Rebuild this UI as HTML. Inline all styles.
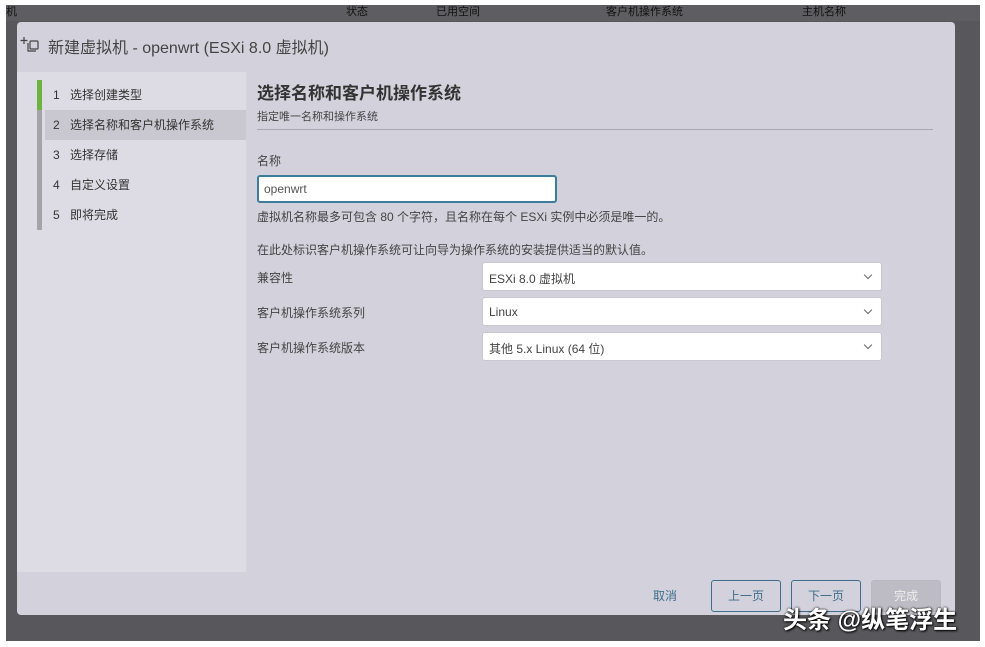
<!DOCTYPE html>
<html><head><meta charset="utf-8"><style>
*{margin:0;padding:0;box-sizing:border-box}
body{width:985px;height:647px;background:#fff;position:relative;overflow:hidden;font-family:"Liberation Sans","Noto Sans CJK SC",sans-serif;color:#333}
.bg{position:absolute;left:6px;top:5px;width:974px;height:636px;background:#58585c}
.hdr{position:absolute;left:6px;top:5px;width:974px;height:16px;background:#5e5e62;font-size:11px;color:#111;line-height:14px}
.hdr span{position:absolute;top:0}
.dlg{position:absolute;left:17px;top:22px;width:938px;height:593px;background:#d3d1db;border-radius:4px}
.title{position:absolute;left:31px;top:12px;font-size:16px;color:#444}
.ico{position:absolute;left:3px;top:14px;width:20px;height:16px}
.nav{position:absolute;left:0;top:50px;width:229px;height:500px;background:#dddce5}
.bar{position:absolute;left:20px;top:8px;width:5px;height:150px;background:#a3a3a8}
.bar i{display:block;width:5px;height:30px;background:#6db33f}
.step{position:absolute;left:28px;width:201px;height:30px;line-height:30px;font-size:12px;color:#333;padding-left:8px}
.step b{font-weight:normal;display:inline-block;width:17px}
.act{background:#c9c8d0}
.h{position:absolute;left:240px;top:57px;font-size:17px;font-weight:bold;color:#333}
.sub{position:absolute;left:240px;top:86px;font-size:11px;color:#444}
.line{position:absolute;left:240px;top:107px;width:676px;height:1px;background:#a8a8b0}
.t{position:absolute;font-size:12px;color:#444}
.inp{position:absolute;left:240px;top:153px;width:300px;height:28px;background:#fff;border:2px solid #3d7c9a;border-radius:3px;font-size:12px;padding:5px 5px;color:#555}
.sel{position:absolute;left:465px;width:400px;height:29px;background:#fff;border-radius:3px;font-size:12px;color:#444;padding:7px 6px;border:1px solid #c8c8d0}
.sel:after{content:"";position:absolute;right:10px;top:9px;width:5px;height:5px;border-right:1px solid #666;border-bottom:1px solid #666;transform:rotate(45deg)}
.btn{position:absolute;top:558px;height:32px;width:70px;border:1px solid #3d6f8c;border-radius:3px;font-size:12px;color:#3d6f8c;text-align:center;line-height:30px}
.wm{position:absolute;left:783px;top:600px;font-size:24px;color:#fff;text-shadow:1px 1px 2px #000,0 0 2px #000;font-weight:bold}
</style></head><body>
<div class="bg"></div>
<div class="hdr"><span style="left:0">机</span><span style="left:340px">状态</span><span style="left:430px">已用空间</span><span style="left:600px">客户机操作系统</span><span style="left:796px">主机名称</span></div>
<div class="dlg">
<svg class="ico" viewBox="0 0 20 16" fill="none" stroke="#444" stroke-width="1.2"><path d="M4 1v7M0.5 4.5h7"/><rect x="10" y="5" width="8" height="8" rx="1"/><path d="M8 7v8h8"/></svg>
<div class="title">新建虚拟机 - openwrt (ESXi 8.0 虚拟机)</div>
<div class="nav">
<div class="bar"><i></i></div>
<div class="step" style="top:8px"><b>1</b>选择创建类型</div>
<div class="step act" style="top:38px"><b>2</b>选择名称和客户机操作系统</div>
<div class="step" style="top:68px"><b>3</b>选择存储</div>
<div class="step" style="top:98px"><b>4</b>自定义设置</div>
<div class="step" style="top:128px"><b>5</b>即将完成</div>
</div>
<div class="h">选择名称和客户机操作系统</div>
<div class="sub">指定唯一名称和操作系统</div>
<div class="line"></div>
<div class="t" style="left:240px;top:130px">名称</div>
<div class="inp">openwrt</div>
<div class="t" style="left:240px;top:186px">虚拟机名称最多可包含 80 个字符，且名称在每个 ESXi 实例中必须是唯一的。</div>
<div class="t" style="left:240px;top:219px">在此处标识客户机操作系统可让向导为操作系统的安装提供适当的默认值。</div>
<div class="t" style="left:240px;top:247px">兼容性</div>
<div class="t" style="left:240px;top:282px">客户机操作系统系列</div>
<div class="t" style="left:240px;top:317px">客户机操作系统版本</div>
<div class="sel" style="top:240px">ESXi 8.0 虚拟机</div>
<div class="sel" style="top:275px">Linux</div>
<div class="sel" style="top:310px">其他 5.x Linux (64 位)</div>
<div class="t" style="left:636px;top:565px;color:#3d6f8c">取消</div>
<div class="btn" style="left:694px">上一页</div>
<div class="btn" style="left:774px">下一页</div>
<div class="btn" style="left:854px;border-color:#b8b8c0;background:#bdbcc4;color:#eee">完成</div>
</div>
<div class="wm">头条 @纵笔浮生</div>
</body></html>
